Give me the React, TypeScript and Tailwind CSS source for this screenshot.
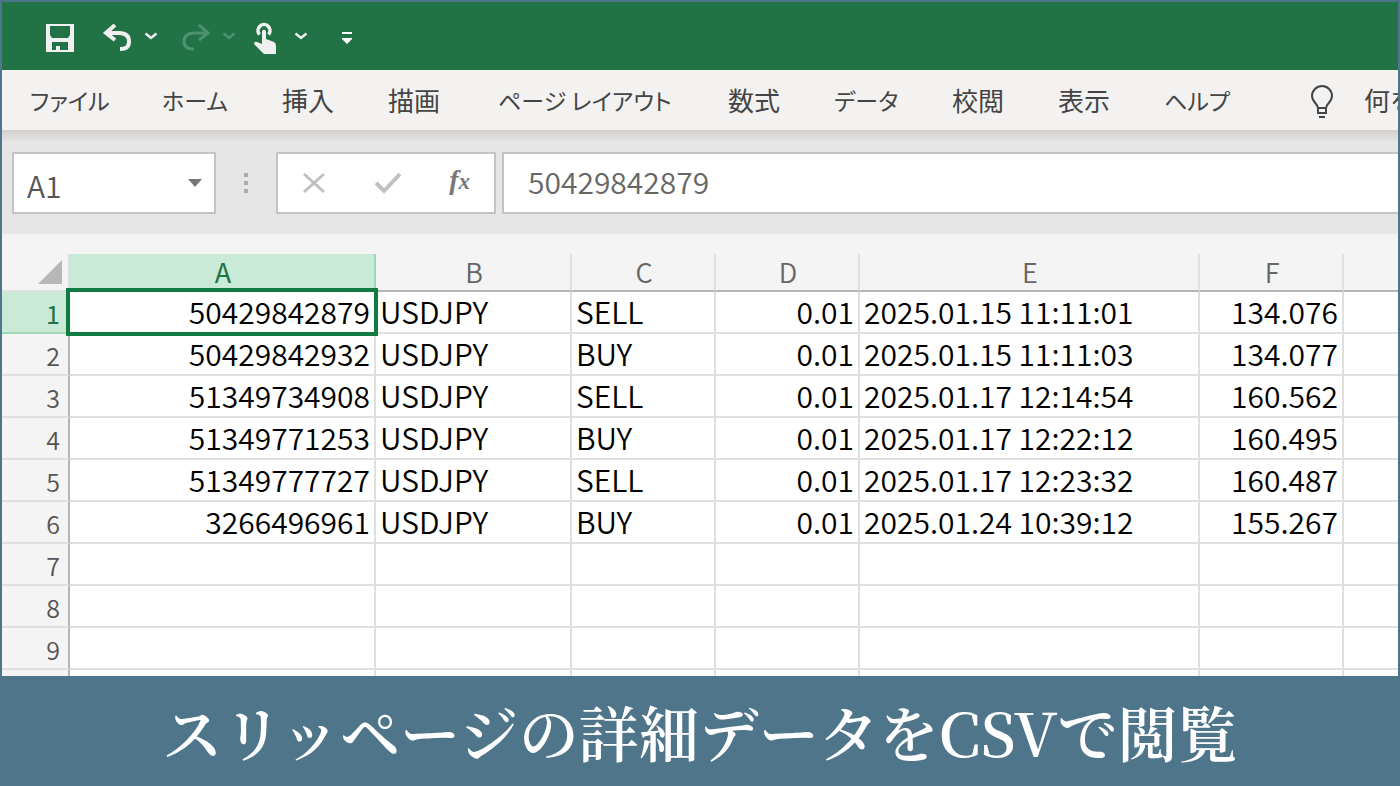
import React from 'react';

interface Trade {
  ticket: string;
  symbol: string;
  side: string;
  lots: string;
  time: string;
  price: string;
}

const menuItems = ['ファイル', 'ホーム', '挿入', '描画', 'ページ レイアウト', '数式', 'データ', '校閲', '表示', 'ヘルプ'];

const columns = ['A', 'B', 'C', 'D', 'E', 'F', ''];

const trades: Trade[] = [
  { ticket: '50429842879', symbol: 'USDJPY', side: 'SELL', lots: '0.01', time: '2025.01.15 11:11:01', price: '134.076' },
  { ticket: '50429842932', symbol: 'USDJPY', side: 'BUY', lots: '0.01', time: '2025.01.15 11:11:03', price: '134.077' },
  { ticket: '51349734908', symbol: 'USDJPY', side: 'SELL', lots: '0.01', time: '2025.01.17 12:14:54', price: '160.562' },
  { ticket: '51349771253', symbol: 'USDJPY', side: 'BUY', lots: '0.01', time: '2025.01.17 12:22:12', price: '160.495' },
  { ticket: '51349777727', symbol: 'USDJPY', side: 'SELL', lots: '0.01', time: '2025.01.17 12:23:32', price: '160.487' },
  { ticket: '3266496961', symbol: 'USDJPY', side: 'BUY', lots: '0.01', time: '2025.01.24 10:39:12', price: '155.267' },
];

const rowNumbers = [1, 2, 3, 4, 5, 6, 7, 8, 9, 10];

const Chevron: React.FC = () => (
  <svg width="14" height="12" viewBox="0 0 14 12" fill="none" stroke="currentColor" strokeWidth="2.4">
    <path d="M1.5 1.5 7 6l5.5-4.5" />
  </svg>
);

const QuickAccess: React.FC = () => (
  <div className="flex h-[68px] shrink-0 items-center bg-[#217346] pt-1 pl-11 text-[#f0f0f0]">
    <button aria-label="上書き保存">
      <svg width="28" height="28" viewBox="0 0 28 28" fill="currentColor" fillRule="evenodd">
        <path d="M0 0h28v28H0zM4 2v9l2 3h16l2-3V2zM6 18v8h4v-4h4v4h8v-8z" />
      </svg>
    </button>
    <button aria-label="元に戻す" className="ml-7">
      <svg width="30" height="28" viewBox="0 0 30 28" fill="none" stroke="currentColor" strokeWidth="4">
        <path d="M13 1 4 9l9 7M4 9h13c7 0 10 3 10 8.500S24 25 18 25" />
      </svg>
    </button>
    <button aria-label="元に戻すの一覧" className="ml-3">
      <Chevron />
    </button>
    <button aria-label="やり直し" className="ml-6 text-[#4f9270]">
      <svg width="30" height="28" viewBox="0 0 30 28" fill="none" stroke="currentColor" strokeWidth="3">
        <path d="m17 1 9 8-9 7M26 9H13C6 9 2 12 2 17.500S6 25 12 25" />
      </svg>
    </button>
    <button aria-label="やり直しの一覧" className="ml-[10px] text-[#4f9270]">
      <Chevron />
    </button>
    <button aria-label="タッチ/マウス モードの切り替え" className="ml-[18px]">
      <svg width="24" height="32" viewBox="0 0 24 32">
        <path d="M5.500 12.500a6 6 0 1 1 9 0" fill="none" stroke="currentColor" strokeWidth="3.600" />
        <path d="M8 9q2-2.500 4 0v8l8 3q2 1 2 4v8H10L0 22q0-3 3-2l5 2z" fill="currentColor" />
      </svg>
    </button>
    <button aria-label="モードの一覧" className="ml-4">
      <Chevron />
    </button>
    <button aria-label="クイック アクセスのカスタマイズ" className="ml-8">
      <svg width="14" height="14" viewBox="0 0 14 14" fill="#ffffff">
        <path d="M2 1h10v2H2zM2 7h10v1l-5 5-5-5z" />
      </svg>
    </button>
  </div>
);

const Ribbon: React.FC = () => (
  <nav className="grid h-[60px] shrink-0 grid-cols-[132px_120px_106px_110px_230px_106px_118px_106px_106px_146px_54px_1fr] items-center overflow-hidden bg-[#f3f2f1] pl-7 text-[26px] text-[#444444]">
    {menuItems.map((item) => (
      <button
        key={item}
        className={/[ァ-ヶ]/.test(item) ? 'text-left text-[23px] whitespace-nowrap [font-feature-settings:"palt"]' : 'pb-[2px] text-left whitespace-nowrap'}
      >
        {item}
      </button>
    ))}
    <svg width="24" height="36" viewBox="0 0 24 36" fill="none" stroke="currentColor" strokeWidth="2">
      <path d="M8 26c0-4-6-6-6-12a10 10 0 0 1 20 0c0 6-6 8-6 12zM8 26v5h8v-5M9 35h6" />
    </svg>
    <button className="w-0 pb-[2px] text-left whitespace-nowrap">何を</button>
  </nav>
);

const FormulaBar: React.FC = () => (
  <div className="flex h-[104px] shrink-0 items-center bg-[#e6e6e6] bg-linear-to-b from-[#d2d0ce] to-[#e6e6e6] to-[12px] pt-[2px] pl-[10px]">
    <div className="flex h-[62px] w-[204px] shrink-0 items-center justify-between border-2 border-[#c3c3c3] bg-white pr-3">
      <input aria-label="名前ボックス" defaultValue="A1" className="w-32 bg-transparent pt-1 pl-[13px] text-[30px] leading-10 font-[350] text-[#555555] outline-none" />
      <button aria-label="名前の一覧">
        <svg width="14" height="8" viewBox="0 0 14 8" fill="#777777">
          <path d="M0 0h14L7 8z" />
        </svg>
      </button>
    </div>
    <svg width="60" height="22" viewBox="0 0 60 22" fill="#aeaeae" className="shrink-0">
      <path d="M28 1h4v4h-4zM28 9h4v4h-4zM28 17h4v4h-4z" />
    </svg>
    <div className="flex h-[62px] w-[220px] shrink-0 items-center justify-between border-2 border-[#c3c3c3] bg-white px-6">
      <button aria-label="キャンセル">
        <svg width="24" height="22" viewBox="0 0 24 22" fill="none" stroke="#c0c0c0" strokeWidth="3">
          <path d="m2 2 20 18M22 2 2 20" />
        </svg>
      </button>
      <button aria-label="入力">
        <svg width="26" height="22" viewBox="0 0 26 22" fill="none" stroke="#c0c0c0" strokeWidth="4">
          <path d="m1 11 8 8L25 2" />
        </svg>
      </button>
      <button aria-label="関数の挿入" className="pb-1 font-['Liberation_Serif',serif] text-[28px] leading-8 font-bold text-[#777777] italic">
        f<span className="text-[23px]">x</span>
      </button>
    </div>
    <input
      aria-label="数式バー"
      defaultValue="50429842879"
      className="ml-[6px] h-[62px] min-w-0 flex-1 border-2 border-r-0 border-[#c3c3c3] bg-white pb-1 pl-6 text-[30px] font-[350] text-[#666666] outline-none"
    />
  </div>
);

const Sheet: React.FC = () => (
  <div className="min-h-0 flex-1 overflow-hidden bg-[#f4f4f4] pt-5">
    <table className="w-full table-fixed border-separate border-spacing-0 text-[30px] leading-[38px]">
      <colgroup>
        <col className="w-[68px]" />
        <col className="w-[306px]" />
        <col className="w-[196px]" />
        <col className="w-[144px]" />
        <col className="w-[144px]" />
        <col className="w-[340px]" />
        <col className="w-[144px]" />
        <col />
      </colgroup>
      <thead>
        <tr className="text-[27px] leading-9 text-[#666666]">
          <th className="border-r-2 border-b-2 border-r-[#dfdfdf] border-b-[#dfdfdf] p-0 pr-[6px]">
            <svg width="24" height="24" viewBox="0 0 24 24" fill="#b7b7b7" className="ml-auto">
              <path d="M24 0v24H0z" />
            </svg>
          </th>
          {columns.map((name) => (
            <th
              key={name}
              className={
                name === 'A'
                  ? 'border-r-2 border-b-2 border-r-[#9fd8b9] border-b-[#107c41] bg-[#caead8] p-0 pl-[2px] font-normal text-[#217346]'
                  : 'border-r-2 border-b-2 border-r-[#dfdfdf] border-b-[#b5b5b5] p-0 pl-[2px] font-[350] last:border-r-0'
              }
            >
              {name}
            </th>
          ))}
        </tr>
      </thead>
      <tbody className="[&_td]:border-r-2 [&_td]:border-b-2 [&_td]:border-[#dfdfdf] [&_td]:bg-white [&_td]:px-1 [&_td]:pt-0 [&_td]:pb-[2px] [&_td]:font-[350] [&_td]:whitespace-nowrap [&_td:last-child]:border-r-0">
        {rowNumbers.map((n) => {
          const trade = trades[n - 1];
          return (
            <tr key={n} className="h-[42px]">
              <th
                className={
                  n === 1
                    ? 'border-r-2 border-b-2 border-r-[#b5b5b5] border-b-[#9fd8b9] bg-[#caead8] p-0 pt-[2px] pr-2 text-right text-[25px] font-normal text-[#217346]'
                    : 'border-r-2 border-b-2 border-r-[#b5b5b5] border-b-[#dfdfdf] p-0 pt-[2px] pr-2 text-right text-[25px] font-[350] text-[#555555]'
                }
              >
                {n < 10 && n}
              </th>
              <td className="relative text-right">
                {trade?.ticket}
                {n === 1 && <span className="absolute -inset-1 z-10 border-4 border-[#107c41]" />}
              </td>
              <td>{trade?.symbol}</td>
              <td>{trade?.side}</td>
              <td className="text-right">{trade?.lots}</td>
              <td>{trade?.time}</td>
              <td className="text-right">{trade?.price}</td>
              <td />
            </tr>
          );
        })}
      </tbody>
    </table>
  </div>
);

export default function App() {
  return (
    <div className="flex h-screen flex-col bg-[#4f758b] font-['Noto_Sans_CJK_JP',sans-serif] text-black">
      <main className="flex min-h-0 flex-1 flex-col overflow-hidden border-2 border-b-0 border-[#4f758b]">
        <QuickAccess />
        <Ribbon />
        <FormulaBar />
        <Sheet />
      </main>
      <h1 className="flex h-[110px] shrink-0 items-center justify-center font-['Noto_Serif_CJK_JP','Noto_Sans_CJK_JP',serif] text-[60px] font-semibold whitespace-nowrap text-white">
        スリッページの詳細データをCSVで閲覧
      </h1>
    </div>
  );
}
